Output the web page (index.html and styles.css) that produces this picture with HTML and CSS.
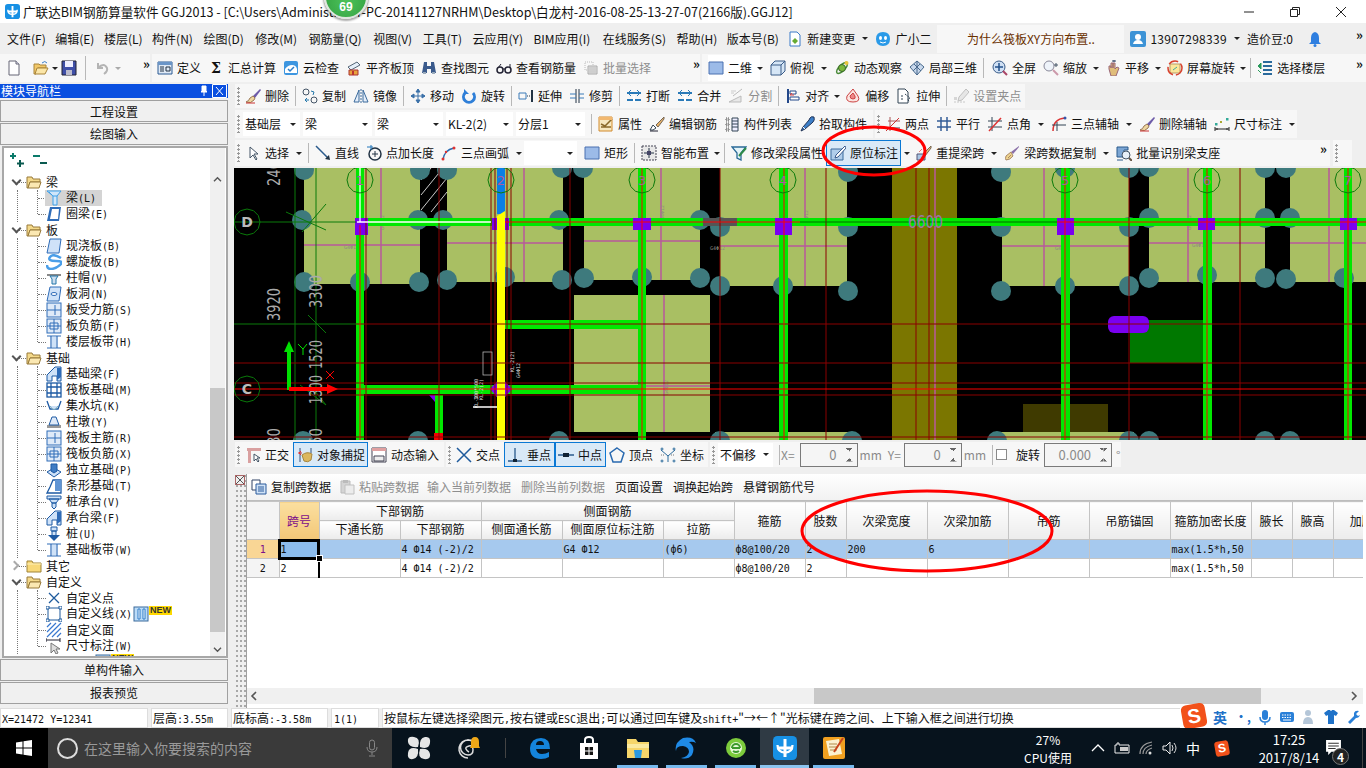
FILE: index.html
```html
<!DOCTYPE html>
<html lang="zh-CN">
<head>
<meta charset="utf-8">
<title>广联达BIM钢筋算量软件 GGJ2013</title>
<link rel="stylesheet" href="styles.css">
</head>
<body>
<svg class="defs" aria-hidden="true">
<defs>
<symbol id="new" viewBox="0 0 16 16"><path d="M3 1h7l3 3v11H3z" fill="#fff" stroke="#667"/><path d="M10 1v3h3" fill="#dde" stroke="#667"/></symbol>
<symbol id="open" viewBox="0 0 16 16"><path d="M1 4h5l1 1h6v3H5L3 14H1z" fill="#f2c868" stroke="#a8843a"/><path d="M4 8h11l-3 6H2z" fill="#fbe6a8" stroke="#a8843a"/><path d="M9 3q3-3 5 0" fill="none" stroke="#3a7ec8"/></symbol>
<symbol id="save" viewBox="0 0 16 16"><path d="M1 1h14v14H1z" fill="#3f4fa8" stroke="#223"/><path d="M4 1h8v6H4z" fill="#eef"/><path d="M5 10h6v5H5z" fill="#bbc"/></symbol>
<symbol id="undo" viewBox="0 0 16 16"><path d="M4 3v5h5M4 8q6-6 9 0q1 3-3 6" fill="none" stroke="#b4b4b4" stroke-width="2"/></symbol>
<symbol id="def" viewBox="0 0 16 16"><path d="M1 2h14v12H1z" fill="#dfe9f5" stroke="#2a5b94"/><path d="M1 2h14v3H1z" fill="#6a95c8"/><path d="M3 7h4M3 9h4M3 11h4M9 7h4v4H9z" fill="none" stroke="#234"/></symbol>
<symbol id="cloud" viewBox="0 0 16 16"><rect x="1" y="1" width="14" height="14" rx="2" fill="#3d96e0"/><path d="M2 9q3-4 7-4t5 4v4H2z" fill="#fff"/><path d="M5 9l2 2 4-4" fill="none" stroke="#2c7ec8" stroke-width="1.5"/></symbol>
<symbol id="flat" viewBox="0 0 16 16"><path d="M2 7l9-5 3 3-9 5z" fill="#e6f0fa" stroke="#567"/><path d="M3 10h9v5H3z" fill="#e8a33c" stroke="#a33"/><path d="M6 11h2v4H6z" fill="#b33"/></symbol>
<symbol id="binoc" viewBox="0 0 16 16"><path d="M3 2h3v4h4V2h3l2 11h-5V9H6v4H1z" fill="#3a5a8c"/><path d="M2 12h3v2H2zM11 12h3v2h-3z" fill="#9ab"/></symbol>
<symbol id="glass" viewBox="0 0 16 16"><circle cx="4" cy="10" r="3" fill="none" stroke="#223" stroke-width="1.5"/><circle cx="12" cy="10" r="3" fill="none" stroke="#223" stroke-width="1.5"/><path d="M7 9h2M2 8l3-4M14 8V4" fill="none" stroke="#223"/></symbol>
<symbol id="batch" viewBox="0 0 16 16"><path d="M2 2h8v8H2z" fill="none" stroke="#bbb" stroke-dasharray="1 1"/><path d="M5 6h9v8H5z" fill="#e2e2e2" stroke="#aaa"/><path d="M6 8h7M6 10h7M6 12h7" stroke="#bbb"/></symbol>
<symbol id="sq" viewBox="0 0 16 16"><path d="M1 2h14v12H1z" fill="#9cbbe8" stroke="#4a70b0"/></symbol>
<symbol id="top" viewBox="0 0 16 16"><path d="M1 5l4-4h10v10l-4 4H1z" fill="#d6e6f6" stroke="#3a5c88"/><path d="M1 5h10v10M11 5l4-4" fill="none" stroke="#3a5c88"/></symbol>
<symbol id="orbit" viewBox="0 0 16 16"><ellipse cx="8" cy="8" rx="7" ry="3" transform="rotate(-45 8 8)" fill="none" stroke="#4a8a3a" stroke-width="1.5"/><circle cx="8" cy="8" r="3.5" fill="#7cb83c" stroke="#3a6a2a"/><circle cx="12.5" cy="3" r="2" fill="#e8c43c"/></symbol>
<symbol id="l3d" viewBox="0 0 16 16"><path d="M8 1l7 6-7 8-7-8z" fill="#c8d8ec" stroke="#48698c"/><path d="M5 4l7 7M11 4L4 11M8 1v14" stroke="#48698c"/></symbol>
<symbol id="full" viewBox="0 0 16 16"><circle cx="7" cy="7" r="6" fill="#cfe0f4" stroke="#3a5c88"/><path d="M7 3v8M3 7h8" stroke="#23508a" stroke-width="1.5"/><path d="M11 11l4 4" stroke="#a46" stroke-width="2"/></symbol>
<symbol id="zoom" viewBox="0 0 16 16"><circle cx="6" cy="6" r="5" fill="#eef3fa" stroke="#889"/><path d="M10 10l5 5" stroke="#c9a" stroke-width="2"/><path d="M13 3v4M11 5h4" stroke="#456"/></symbol>
<symbol id="hand" viewBox="0 0 16 16"><path d="M4 9V6h2v2-5h2v5-5h2v6l2-2 2 1-3 8H6z" fill="#e0bd7a" stroke="#967"/><path d="M9 0v2M7 1h4" stroke="#346"/></symbol>
<symbol id="rot" viewBox="0 0 16 16"><rect x="3" y="4" width="10" height="9" fill="#fbe79a" stroke="#b96"/><circle cx="8" cy="8" r="7" fill="none" stroke="#d8402c" stroke-width="1.5" stroke-dasharray="10 3"/><path d="M6 10l4-3" stroke="#4a9"/></symbol>
<symbol id="floor" viewBox="0 0 16 16"><path d="M6 2h9M6 6h9M6 10h9M6 14h9" stroke="#2a6a9c" stroke-width="2"/><path d="M4 3L1 6l3 3zM1 10l3 3" fill="#2a9a5c" stroke="#2a9a5c"/></symbol>
<symbol id="brush" viewBox="0 0 16 16"><path d="M15 1l-7 7 2 2 6-8z" fill="#6d5ba8"/><path d="M8 8l-3 2q-1 3-4 4 5 2 8-2l1-2z" fill="#eed6a0" stroke="#975"/><path d="M1 15h9" stroke="#c33"/></symbol>
<symbol id="copy" viewBox="0 0 16 16"><circle cx="4" cy="4" r="3" fill="none" stroke="#456"/><circle cx="12" cy="12" r="3" fill="none" stroke="#456"/><path d="M5 10l-2 2 2 2M3 12h4M9 3l3 1-1 3" fill="none" stroke="#27a"/></symbol>
<symbol id="mirror" viewBox="0 0 16 16"><path d="M6 2v12H1zM10 2v12h5z" fill="#e4eefa" stroke="#3a6a9c"/><path d="M8 1v14" stroke="#3a6a9c" stroke-dasharray="2 1"/></symbol>
<symbol id="move" viewBox="0 0 16 16"><path d="M8 1v14M1 8h14M8 1L6 4h4zM8 15l-2-3h4zM1 8l3-2v4zM15 8l-3-2v4z" fill="#3a70a8" stroke="#3a70a8"/></symbol>
<symbol id="spin" viewBox="0 0 16 16"><path d="M12 5a5.5 5.5 0 1 1-8 0" fill="none" stroke="#2f7fd8" stroke-width="3"/><path d="M3 1v5h5z" fill="#2f7fd8"/></symbol>
<symbol id="ext" viewBox="0 0 16 16"><path d="M14 2v12" stroke="#234" stroke-width="2"/><path d="M1 5h7v6H1z" fill="none" stroke="#3a7ab8"/><path d="M9 8h4" stroke="#234" stroke-dasharray="1 1"/></symbol>
<symbol id="trim" viewBox="0 0 16 16"><path d="M7 1v14M10 1v14" stroke="#234"/><path d="M1 6h6M1 10h6M10 6h5M10 10h5" stroke="#3a7ab8"/></symbol>
<symbol id="brk" viewBox="0 0 16 16"><path d="M1 5h14M1 12h14" stroke="#2a7ab8" stroke-width="2"/><path d="M5 2L2 5l3 3M11 2l3 3-3 3" fill="none" stroke="#2a7ab8"/><path d="M8 8v6" stroke="#fff" stroke-width="2"/></symbol>
<symbol id="split" viewBox="0 0 16 16"><path d="M1 14h12V8L1 14zM5 8l9-7" fill="#e8e8e8" stroke="#bbb"/><path d="M3 3h5M3 5h3" stroke="#ccc"/></symbol>
<symbol id="align" viewBox="0 0 16 16"><path d="M3 1v14" stroke="#23488a" stroke-width="2"/><path d="M5 3h6v3H5zM5 9h9v3H5z" fill="#fff" stroke="#23488a"/><path d="M9 7L5 7l2-2" fill="none" stroke="#d44"/></symbol>
<symbol id="offset" viewBox="0 0 16 16"><path d="M8 1l5 7q3 6-5 6t-6-6z" fill="#fbe4e0" stroke="#c44"/><path d="M8 5l2 3q1 3-2 3t-3-3z" fill="#e88" stroke="#c44"/></symbol>
<symbol id="stretch" viewBox="0 0 16 16"><path d="M2 1h7l3 3v11H2z" fill="#fff" stroke="#345"/><path d="M9 6l5 4-2 1 1 3M5 8h2M5 11h2" fill="none" stroke="#345" stroke-dasharray="2 1"/></symbol>
<symbol id="grip" viewBox="0 0 16 16"><path d="M13 1L6 9l-1 4 4-1 7-8z" fill="#e6e6e6" stroke="#c0c0c0"/><path d="M1 14h12" stroke="#c8c8c8" stroke-dasharray="2 1"/><rect x="1" y="9" width="3" height="3" fill="#d6d6d6"/></symbol>
<symbol id="attr" viewBox="0 0 16 16"><path d="M1 1h13v14H1z" fill="#f7e8c0" stroke="#d28a2c"/><path d="M3 8l4 2 7-7M3 11h10" fill="none" stroke="#8a6a2a" stroke-width="1.5"/><path d="M1 1h13v3H1z" fill="#f2b870"/></symbol>
<symbol id="edit" viewBox="0 0 16 16"><path d="M15 1l-8 8 2 2 6-8z" fill="#e6b36a" stroke="#765"/><path d="M1 14l3-5 3 3-3 2z" fill="#fff" stroke="#345"/><path d="M1 15h8" stroke="#223"/></symbol>
<symbol id="list" viewBox="0 0 16 16"><path d="M2 2h3v3H2zM2 7h3v3H2zM2 12h3v3H2z" fill="#ccc" stroke="#555" stroke-dasharray="1 1"/><path d="M8 2h6v13H8z" fill="#eef" stroke="#345"/><path d="M8 5h6M8 8h6M8 11h6" stroke="#345"/></symbol>
<symbol id="pick" viewBox="0 0 16 16"><path d="M15 1q-3-1-4 1l-1 2-6 7-2 4 4-2 7-6 1-1q2-2 1-5z" fill="#3d7fc8" stroke="#235"/><path d="M4 11l2 2" stroke="#fff"/></symbol>
<symbol id="two" viewBox="0 0 16 16"><path d="M3 5h12M5 1v14" stroke="#a55"/><path d="M1 15l13-13" stroke="#c33"/><path d="M5 12h10" stroke="#345"/></symbol>
<symbol id="par" viewBox="0 0 16 16"><path d="M1 5h14M1 11h14M5 1v14M11 1v14" stroke="#345d98" stroke-width="1.5"/></symbol>
<symbol id="ang" viewBox="0 0 16 16"><path d="M1 5h14M1 11h14M5 1v14" stroke="#345"/><path d="M2 15L14 2" stroke="#d33" stroke-width="1.5"/></symbol>
<symbol id="arcx" viewBox="0 0 16 16"><path d="M2 15q0-12 12-13" fill="none" stroke="#d33" stroke-width="1.5"/><path d="M1 9h14M6 6v9" stroke="#345"/><circle cx="14" cy="2" r="1.5" fill="#35a"/></symbol>
<symbol id="dim" viewBox="0 0 16 16"><path d="M1 13h14M1 11v4M15 11v4M4 13l-2 0M12 13h2" stroke="#222"/><rect x="1" y="7" width="2.500" height="2.500" fill="#3a9"/><rect x="12" y="2" width="2.500" height="2.500" fill="#3a9"/><rect x="6" y="5" width="2" height="2" fill="#aa3"/></symbol>
<symbol id="sel" viewBox="0 0 16 16"><path d="M5 2v11l3-3 3 5 1-1-3-5h4z" fill="#fff" stroke="#456"/></symbol>
<symbol id="line" viewBox="0 0 16 16"><path d="M1 1l12 12" stroke="#2a5a8c" stroke-width="1.5"/><path d="M15 15l-5-1 4-4z" fill="#234"/></symbol>
<symbol id="addl" viewBox="0 0 16 16"><circle cx="9" cy="9" r="6" fill="none" stroke="#234" stroke-width="1.5"/><path d="M9 6v6M6 9h6" stroke="#234"/><path d="M1 2h6M5 0v5" stroke="#27b"/></symbol>
<symbol id="arc" viewBox="0 0 16 16"><path d="M2 15q1-10 11-12" fill="none" stroke="#2a6ab0" stroke-width="1.5"/><circle cx="2" cy="14" r="1.500" fill="#d33"/><circle cx="13" cy="3" r="1.500" fill="#d33"/><circle cx="5" cy="7" r="1.200" fill="#d33"/></symbol>
<symbol id="smart" viewBox="0 0 16 16"><path d="M1 1h14v14H1z" fill="#e8e8e8" stroke="#445" stroke-dasharray="2 1"/><path d="M8 3v10M3 8h10" stroke="#234"/><rect x="6" y="6" width="4" height="4" fill="#446"/></symbol>
<symbol id="mod" viewBox="0 0 16 16"><path d="M1 2h14l-5 6v7l-4-2V8z" fill="#e4f4f8" stroke="#2a6a98" stroke-width="1.300"/><path d="M15 3L8 11" stroke="#2e8a4a" stroke-width="2"/></symbol>
<symbol id="orig" viewBox="0 0 16 16"><path d="M1 4h12v11H1z" fill="#b0cdea" stroke="#3a6a9c"/><path d="M15 1L6 10l-1 3 3-1 8-9z" fill="#fff" stroke="#3a5a8c"/></symbol>
<symbol id="re" viewBox="0 0 16 16"><path d="M1 9h8v6H1z" fill="#a9c7e4" stroke="#557"/><path d="M15 1L7 9l2 2 6-8z" fill="#e4c07c" stroke="#765"/><path d="M3 7l3-3" stroke="#d77"/></symbol>
<symbol id="dup" viewBox="0 0 16 16"><path d="M15 1L7 7l2 2 6-7z" fill="#8a6fa8"/><path d="M7 7L2 11q-1 3 0 4 4 0 7-4z" fill="#efd58e" stroke="#a86"/><path d="M4 13l3-3" stroke="#a86"/></symbol>
<symbol id="bat" viewBox="0 0 16 16"><path d="M1 2h11v3h-4v7H1z" fill="#7ca6d4" stroke="#2a5a8c"/><circle cx="10" cy="10" r="4" fill="#e8f0f8" stroke="#456"/><path d="M13 13l3 3" stroke="#654" stroke-width="2"/><path d="M1 15h6" stroke="#2a5a8c"/></symbol>
<symbol id="ortho" viewBox="0 0 16 16"><path d="M2 1h14v3H2z" fill="#d9a0a0"/><path d="M3 1h3v15H3z" fill="#d9a0a0"/><path d="M9 7v7l2-2 2 3 1-1-2-3h3z" fill="#fff" stroke="#456"/></symbol>
<symbol id="snap" viewBox="0 0 16 16"><path d="M3 1v14M14 1v5" stroke="#33507a"/><path d="M1 6h4M4 4l-2 2 2 2" fill="none" stroke="#d33"/><path d="M5 8q5-4 10-1l-1 6q-3 3-7 1z" fill="#dcb75e" stroke="#a7853c"/></symbol>
<symbol id="dyn" viewBox="0 0 16 16"><path d="M1 1h14v14H1z" fill="#fff" stroke="#445"/><path d="M1 1h14v3H1z" fill="#e0a0a0"/><path d="M3 9h10v5H3z" fill="#eee" stroke="#445"/></symbol>
<symbol id="x" viewBox="0 0 16 16"><path d="M1 1l14 14M15 1L1 15" stroke="#1e5a9c" stroke-width="1.500"/></symbol>
<symbol id="perp" viewBox="0 0 16 16"><path d="M8 1v14M1 14h14" stroke="#2a5a8c" stroke-width="1.300"/><rect x="6" y="12" width="4" height="3" fill="#123"/></symbol>
<symbol id="mid" viewBox="0 0 16 16"><path d="M0 8h16" stroke="#2a5a8c" stroke-width="1.500"/><rect x="5" y="6" width="6" height="4" fill="#123"/></symbol>
<symbol id="vert" viewBox="0 0 16 16"><path d="M8 1l7 5-3 9H4L1 6z" fill="none" stroke="#2a6ab0" stroke-width="1.500"/></symbol>
<symbol id="coord" viewBox="0 0 16 16"><path d="M1 3l7 6v6M15 3L8 9" fill="none" stroke="#2a6a9c"/><g fill="none" stroke="#2a6a9c"><circle cx="2" cy="2" r="1"/><circle cx="14" cy="2" r="1"/><circle cx="2" cy="14" r="1"/><circle cx="14" cy="14" r="1"/></g><path d="M1 8h4M11 8h4" stroke="#777" stroke-dasharray="1 1"/></symbol>
<symbol id="cdat" viewBox="0 0 16 16"><path d="M1 1h8v10H1z" fill="#fff" stroke="#346"/><path d="M5 5h10v10H5z" fill="#d0e2f6" stroke="#2a5a9c"/><path d="M7 8h6M7 10h6M7 12h6" stroke="#2a5a9c"/></symbol>
<symbol id="paste" viewBox="0 0 16 16"><path d="M2 2h9v12H2z" fill="#d4d4d4" stroke="#bbb"/><path d="M6 6h9v9H6z" fill="#ececec" stroke="#c0c0c0"/><rect x="4" y="1" width="5" height="3" fill="#bbb"/></symbol>
<symbol id="bell" viewBox="0 0 16 16"><path d="M8 1q-4 1-4 6v4l-2 2h12l-2-2V7q0-5-4-6z" fill="#2f7fe0"/><circle cx="8" cy="14.500" r="1.500" fill="#2f7fe0"/></symbol>
<symbol id="doc" viewBox="0 0 16 16"><path d="M3 1h7l3 3v11H3z" fill="#fff" stroke="#3a7ac8"/><path d="M8 13l-3-3 3-3 3 3z" fill="#66aa33"/></symbol>
<symbol id="bot" viewBox="0 0 16 16"><path d="M8 1q7 0 7 7 0 7-7 7T1 8q0-7 7-7z" fill="#2a9ae8"/><ellipse cx="5.500" cy="7" rx="1.500" ry="2" fill="#fff"/><ellipse cx="10.500" cy="7" rx="1.500" ry="2" fill="#fff"/><path d="M5 11q3 2 6 0" stroke="#fff" fill="none"/></symbol>
<symbol id="user" viewBox="0 0 16 16"><rect width="16" height="16" rx="2" fill="#3d93d6"/><circle cx="8" cy="6" r="3" fill="#fff"/><path d="M3 13q1-4 5-4t5 4z" fill="#fff"/></symbol>

<symbol id="t-beam" viewBox="0 0 16 16"><path d="M1 1h14l-4 5v9H7V6z" fill="#cfe6fa" stroke="#3fa0e8"/><path d="M7 6h4" stroke="#3fa0e8"/><path d="M3 2l3 3" stroke="#3fa0e8"/></symbol>
<symbol id="t-ring" viewBox="0 0 16 16"><path d="M4 1h11l-2 14H1z" fill="#2f6cb8"/><path d="M6 3h7l-1 10H4z" fill="#fff"/></symbol>
<symbol id="t-slab" viewBox="0 0 16 16"><path d="M4 1h11l-2 14H1z" fill="#cfe2f8" stroke="#2f6cb8"/></symbol>
<symbol id="t-sp" viewBox="0 0 16 16"><path d="M15 4Q7-1 4 3t6 4 4 4-9 4-4-4" fill="none" stroke="#4a9ee8" stroke-width="2.500"/></symbol>
<symbol id="t-cap" viewBox="0 0 16 16"><path d="M1 4h14v2H1z" fill="#888"/><path d="M4 6h8l-2 3v5H6V9z" fill="#cde" stroke="#27a"/></symbol>
<symbol id="t-hole" viewBox="0 0 16 16"><path d="M4 1h11l-2 14H1z" fill="#cfe2f8" stroke="#2f6cb8"/><ellipse cx="8" cy="8" rx="3" ry="1.500" fill="#fff" stroke="#2f6cb8"/></symbol>
<symbol id="t-reb" viewBox="0 0 16 16"><rect x="1" y="1" width="14" height="14" fill="#dfeaf8" stroke="#2f6cb8"/><path d="M1 8h14M9 3v10" stroke="#2f6cb8"/></symbol>
<symbol id="t-neg" viewBox="0 0 16 16"><rect x="1" y="1" width="14" height="14" fill="#dfeaf8" stroke="#2f6cb8"/><path d="M4 5h8v6H4zM8 1v14M1 8h14" fill="none" stroke="#2f6cb8"/></symbol>
<symbol id="t-band" viewBox="0 0 16 16"><path d="M1 2h14M1 14h14M5 2v12M11 2v12" stroke="#2f6cb8" stroke-width="1.200"/><path d="M6 3h4v10H6z" fill="#cfe2f8"/></symbol>
<symbol id="t-fb" viewBox="0 0 16 16"><path d="M1 15V9l8-8h6v14h-4v-5H6v5z" fill="#cfe2f8" stroke="#1d5aa4"/><path d="M11 2l4 0v9l-4 3z" fill="#2f6cb8"/></symbol>
<symbol id="t-raft" viewBox="0 0 16 16"><rect x="1" y="1" width="14" height="14" fill="#fff" stroke="#1d5aa4" stroke-width="1.300"/><path d="M5 1v14M11 1v14M1 5h14M1 11h14" stroke="#1d5aa4" stroke-width="1.300"/></symbol>
<symbol id="t-pit" viewBox="0 0 16 16"><path d="M1 3l3 8h8l3-8" fill="none" stroke="#1d5aa4" stroke-width="1.300"/><path d="M4 8q4 7 8 0" fill="#cfe2f8" stroke="#7ab"/></symbol>
<symbol id="t-pier" viewBox="0 0 16 16"><path d="M1 11h14v3H1z" fill="#999"/><path d="M6 3h4l3 8H3z" fill="#dfeaf8" stroke="#1d5aa4"/></symbol>
<symbol id="t-iso" viewBox="0 0 16 16"><path d="M1 10l7-4 7 4-7 5z" fill="#cfe2f8" stroke="#1d5aa4"/><path d="M5 2h6v7l-3 2-3-2z" fill="#3f7cc4" stroke="#1d5aa4"/></symbol>
<symbol id="t-str" viewBox="0 0 16 16"><path d="M1 15l3-6 3-7h8v13z" fill="#fff" stroke="#1d5aa4" stroke-width="1.300"/><path d="M9 2h6v11H9z" fill="#5f94d4"/></symbol>
<symbol id="t-cp" viewBox="0 0 16 16"><path d="M1 2h14v3H1zM3 5h10l-3 4H6zM6 9h4v4L8 15l-2-2z" fill="#cfe2f8" stroke="#1d5aa4"/></symbol>
<symbol id="t-pile" viewBox="0 0 16 16"><path d="M5 1h6v4H5zM6 5h4v5H6z" fill="#cfe2f8" stroke="#1d5aa4"/><path d="M2 9h12L8 15z" fill="#1d5aa4"/></symbol>
<symbol id="t-cross" viewBox="0 0 16 16"><path d="M3 3l10 10M13 3L3 13" stroke="#1e5a9c" stroke-width="1.300"/></symbol>
<symbol id="t-rect" viewBox="0 0 16 16"><path d="M2 2h12v12H2z" fill="none" stroke="#1e5a9c"/><path d="M0 0h3v3H0zM13 0h3v3h-3zM0 13h3v3H0zM13 13h3v3h-3z" fill="#fff" stroke="#1e5a9c"/></symbol>
<symbol id="t-hatch" viewBox="0 0 16 16"><path d="M1 5l4-4M1 10l9-9M1 15L15 1M6 15l9-9M11 15l4-4" stroke="#3878d0" stroke-width="1.200"/></symbol>
<symbol id="t-dim" viewBox="0 0 16 16"><path d="M0 2h14M0 0v4M14 0v4" stroke="#223"/><path d="M5 5v10l3-3 2 4 2-1-2-4h4z" fill="#ddd" stroke="#777"/></symbol>
<symbol id="t-tbl" viewBox="0 0 16 16"><rect x="1" y="1" width="14" height="14" fill="#bcdcf8" stroke="#3a6a9c"/><path d="M5 3h2v10H5zM10 3h2v10h-2z" fill="#fff" stroke="#2a7ac8"/></symbol>
<symbol id="folder" viewBox="0 0 16 16"><path d="M1 3h5l1 2h7v3H4l-2 6H1z" fill="#f4d98a" stroke="#987a3a"/><path d="M4 8h11l-2 6H2z" fill="#fbe8b2" stroke="#987a3a"/></symbol>
<symbol id="fclosed" viewBox="0 0 16 16"><path d="M1 3h5l1 2h8v9H1z" fill="#f8d878" stroke="#a08438"/><path d="M1 6h14" stroke="#fff0b8"/></symbol>
<symbol id="logo" viewBox="0 0 16 16"><rect width="16" height="16" rx="3" fill="#1790e4"/><path d="M8 2v12M3 8h10" stroke="#fff" stroke-width="2" fill="none"/><path d="M3 6q0 5 5 5t5-5" stroke="#fff" fill="none" stroke-width="1.500"/></symbol>
</defs>
</svg>

<header class="title">
  <svg class="logo"><use href="#logo"/></svg>
  <span class="title-text">广联达BIM钢筋算量软件 GGJ2013 - [C:\Users\Administrator-PC-20141127NRHM\Desktop\白龙村-2016-08-25-13-27-07(2166版).GGJ12]</span>
  <span class="win">
    <svg class="wb" viewBox="0 0 12 12"><path d="M1 6h10" stroke="#222"/></svg>
    <svg class="wb" viewBox="0 0 12 12"><path d="M1.500 3.500h7v7h-7zM3.500 3.500v-2h7v7h-2" fill="none" stroke="#222"/></svg>
    <svg class="wb" viewBox="0 0 12 12"><path d="M1 1l10 10M11 1L1 11" stroke="#222"/></svg>
  </span>
</header>

<nav class="menu">
  <span class="mi mn">文件(F)</span><span class="mi mn">编辑(E)</span><span class="mi mn">楼层(L)</span><span class="mi">构件(N)</span><span class="mi mp">绘图(D)</span><span class="mi mp">修改(M)</span><span class="mi mp">钢筋量(Q)</span><span class="mi">视图(V)</span><span class="mi">工具(T)</span><span class="mi">云应用(Y)</span><span class="mi mpp">BIM应用(I)</span><span class="mi">在线服务(S)</span><span class="mi mn">帮助(H)</span><span class="mi">版本号(B)</span>
  <div class="menu-tail">
    <span class="t"><svg class="i"><use href="#doc"/></svg>新建变更</span><i class="ar"></i>
    <span class="t"><svg class="i"><use href="#bot"/></svg>广小二</span>
    <span class="news">为什么筏板XY方向布置..</span>
    <span class="t phone"><svg class="i"><use href="#user"/></svg>13907298339</span><i class="ar"></i>
    <span class="coins">造价豆:0</span>
    <svg class="i i-bell"><use href="#bell"/></svg>
    <span class="more more-end">»</span>
  </div>
</nav>

<div class="row r1">
  <div class="grp g-a">
    <svg class="i"><use href="#new"/></svg>
    <svg class="i i-open"><use href="#open"/></svg><i class="ar ar-tight"></i>
    <svg class="i"><use href="#save"/></svg>
    <b class="sep"></b>
    <svg class="i"><use href="#undo"/></svg><i class="ar off-ar"></i>
    <span class="more">»</span>
  </div>
  <div class="grp g-b">
    <span class="t"><svg class="i"><use href="#def"/></svg>定义</span>
    <span class="t"><span class="sigma">Σ</span>汇总计算</span>
    <span class="t"><svg class="i"><use href="#cloud"/></svg>云检查</span>
    <span class="t"><svg class="i"><use href="#flat"/></svg>平齐板顶</span>
    <span class="t"><svg class="i"><use href="#binoc"/></svg>查找图元</span>
    <span class="t"><svg class="i"><use href="#glass"/></svg>查看钢筋量</span>
    <span class="t off"><svg class="i"><use href="#batch"/></svg>批量选择</span>
    <span class="more">»</span>
  </div>
  <div class="grp g-c">
    <span class="t t-white"><svg class="i"><use href="#sq"/></svg>二维</span><i class="ar"></i>
    <span class="t"><svg class="i"><use href="#top"/></svg>俯视</span><i class="ar"></i>
    <span class="t"><svg class="i"><use href="#orbit"/></svg>动态观察</span>
    <span class="t"><svg class="i"><use href="#l3d"/></svg>局部三维</span>
    <b class="sep sep-r"></b>
    <span class="t"><svg class="i"><use href="#full"/></svg>全屏</span>
    <span class="t"><svg class="i"><use href="#zoom"/></svg>缩放</span><i class="ar ar-s"></i>
    <span class="t"><svg class="i"><use href="#hand"/></svg>平移</span><i class="ar ar-s"></i>
    <span class="t"><svg class="i"><use href="#rot"/></svg>屏幕旋转</span><i class="ar ar-tight"></i>
    <b class="sep"></b>
    <span class="t"><svg class="i"><use href="#floor"/></svg>选择楼层</span>
    <span class="more more-end">»</span>
  </div>
</div>

<main class="main">
  <aside class="nav">
    <div class="nav-head"><span>模块导航栏</span><svg class="pin" viewBox="0 0 10 12"><path d="M3 1h4v5l1 1H2l1-1zM5 7v4" fill="#fff" stroke="#fff"/></svg><svg class="nav-x" viewBox="0 0 15 14"><path d="M.5.5h14v13H.5z" fill="none" stroke="#fff"/><path d="M4 3l7 8M11 3l-7 8" stroke="#fff"/></svg></div>
    <button class="nbtn nb-first">工程设置</button>
    <button class="nbtn">绘图输入</button>
    <div class="treebox">
      <div class="tree">
        <div class="plus">
          <svg class="pm" viewBox="0 0 16 16"><path d="M4 1v6M1 4h6" stroke="#0a7a6a" stroke-width="2"/><path d="M11 8v7M8 11.500h7" stroke="#0a5a50" stroke-width="2"/></svg>
          <svg class="pm pm2" viewBox="0 0 16 16"><path d="M1 4h7" stroke="#0a7a6a" stroke-width="2"/><path d="M8 11h7" stroke="#0a5a50" stroke-width="2"/></svg>
        </div>
        <div class="node"><i class="chev"></i><svg class="i"><use href="#folder"/></svg><span>梁</span></div>
        <div class="kids">
          <div class="leaf cur"><svg class="i"><use href="#t-beam"/></svg><span>梁<span class="m">(L)</span></span></div>
          <div class="leaf"><svg class="i"><use href="#t-ring"/></svg><span>圈梁<span class="m">(E)</span></span></div>
        </div>
        <div class="node"><i class="chev"></i><svg class="i"><use href="#folder"/></svg><span>板</span></div>
        <div class="kids">
          <div class="leaf"><svg class="i"><use href="#t-slab"/></svg><span>现浇板<span class="m">(B)</span></span></div>
          <div class="leaf"><svg class="i"><use href="#t-sp"/></svg><span>螺旋板<span class="m">(B)</span></span></div>
          <div class="leaf"><svg class="i"><use href="#t-cap"/></svg><span>柱帽<span class="m">(V)</span></span></div>
          <div class="leaf"><svg class="i"><use href="#t-hole"/></svg><span>板洞<span class="m">(N)</span></span></div>
          <div class="leaf"><svg class="i"><use href="#t-reb"/></svg><span>板受力筋<span class="m">(S)</span></span></div>
          <div class="leaf"><svg class="i"><use href="#t-neg"/></svg><span>板负筋<span class="m">(F)</span></span></div>
          <div class="leaf"><svg class="i"><use href="#t-band"/></svg><span>楼层板带<span class="m">(H)</span></span></div>
        </div>
        <div class="node"><i class="chev"></i><svg class="i"><use href="#folder"/></svg><span>基础</span></div>
        <div class="kids">
          <div class="leaf"><svg class="i"><use href="#t-fb"/></svg><span>基础梁<span class="m">(F)</span></span></div>
          <div class="leaf"><svg class="i"><use href="#t-raft"/></svg><span>筏板基础<span class="m">(M)</span></span></div>
          <div class="leaf"><svg class="i"><use href="#t-pit"/></svg><span>集水坑<span class="m">(K)</span></span></div>
          <div class="leaf"><svg class="i"><use href="#t-pier"/></svg><span>柱墩<span class="m">(Y)</span></span></div>
          <div class="leaf"><svg class="i"><use href="#t-reb"/></svg><span>筏板主筋<span class="m">(R)</span></span></div>
          <div class="leaf"><svg class="i"><use href="#t-neg"/></svg><span>筏板负筋<span class="m">(X)</span></span></div>
          <div class="leaf"><svg class="i"><use href="#t-iso"/></svg><span>独立基础<span class="m">(P)</span></span></div>
          <div class="leaf"><svg class="i"><use href="#t-str"/></svg><span>条形基础<span class="m">(T)</span></span></div>
          <div class="leaf"><svg class="i"><use href="#t-cp"/></svg><span>桩承台<span class="m">(V)</span></span></div>
          <div class="leaf"><svg class="i"><use href="#t-fb"/></svg><span>承台梁<span class="m">(F)</span></span></div>
          <div class="leaf"><svg class="i"><use href="#t-pile"/></svg><span>桩<span class="m">(U)</span></span></div>
          <div class="leaf"><svg class="i"><use href="#t-band"/></svg><span>基础板带<span class="m">(W)</span></span></div>
        </div>
        <div class="node"><i class="chev chev-r"></i><svg class="i"><use href="#fclosed"/></svg><span>其它</span></div>
        <div class="node"><i class="chev"></i><svg class="i"><use href="#folder"/></svg><span>自定义</span></div>
        <div class="kids">
          <div class="leaf"><svg class="i"><use href="#t-cross"/></svg><span>自定义点</span></div>
          <div class="leaf"><svg class="i"><use href="#t-rect"/></svg><span>自定义线<span class="m">(X)</span></span><svg class="i tag"><use href="#t-tbl"/></svg><span class="new">NEW</span></div>
          <div class="leaf"><svg class="i"><use href="#t-hatch"/></svg><span>自定义面</span></div>
          <div class="leaf"><svg class="i"><use href="#t-dim"/></svg><span>尺寸标注<span class="m">(W)</span></span></div>
        </div>
        <div class="node"><svg class="i"><use href="#fclosed"/></svg><span>其它构件</span><svg class="i tag"><use href="#t-tbl"/></svg><span class="new">NEW</span></div>
      </div>
      <div class="vbar">
        <svg class="sb-a sb-up" viewBox="0 0 10 8"><path d="M1 6l4-4 4 4" fill="none" stroke="#555" stroke-width="1.600"/></svg>
        <div class="thumb"></div>
        <svg class="sb-a" viewBox="0 0 10 8"><path d="M1 2l4 4 4-4" fill="none" stroke="#555" stroke-width="1.600"/></svg>
      </div>
    </div>
    <button class="nbtn nb2">单构件输入</button>
    <button class="nbtn">报表预览</button>
  </aside>

  <section class="work">
    <div class="row r2">
      <div class="grp g2">
        <i class="gr"></i>
        <span class="t"><svg class="i"><use href="#brush"/></svg>删除</span><b class="sep"></b>
        <span class="t"><svg class="i"><use href="#copy"/></svg>复制</span>
        <span class="t"><svg class="i"><use href="#mirror"/></svg>镜像</span><b class="sep"></b>
        <span class="t"><svg class="i"><use href="#move"/></svg>移动</span>
        <span class="t"><svg class="i"><use href="#spin"/></svg>旋转</span><b class="sep"></b>
        <span class="t"><svg class="i"><use href="#ext"/></svg>延伸</span>
        <span class="t"><svg class="i"><use href="#trim"/></svg>修剪</span><b class="sep"></b>
        <span class="t"><svg class="i"><use href="#brk"/></svg>打断</span>
        <span class="t"><svg class="i"><use href="#brk"/></svg>合并</span>
        <span class="t off"><svg class="i"><use href="#split"/></svg>分割</span><b class="sep"></b>
        <span class="t"><svg class="i"><use href="#align"/></svg>对齐</span><i class="ar ar-tight"></i>
        <span class="t"><svg class="i"><use href="#offset"/></svg>偏移</span>
        <span class="t"><svg class="i"><use href="#stretch"/></svg>拉伸</span><b class="sep"></b>
        <span class="t off"><svg class="i"><use href="#grip"/></svg>设置夹点</span>
      </div>
    </div>
    <div class="row r3">
      <div class="grp g3a">
        <i class="gr gr-c"></i>
        <span class="combo c57">基础层<i class="ar"></i></span>
        <span class="combo c69">梁<i class="ar"></i></span>
        <span class="combo c68">梁<i class="ar"></i></span>
        <span class="combo c67">KL-2(2)<i class="ar"></i></span>
        <span class="combo c69 combo-end">分层1<i class="ar"></i></span>
        <b class="sep"></b>
        <span class="t"><svg class="i"><use href="#attr"/></svg>属性</span>
        <span class="t"><svg class="i"><use href="#edit"/></svg>编辑钢筋</span>
        <span class="t"><svg class="i"><use href="#list"/></svg>构件列表</span>
        <span class="t"><svg class="i"><use href="#pick"/></svg>拾取构件</span>
      </div>
      <div class="grp g3b">
        <i class="gr"></i>
        <span class="t"><svg class="i"><use href="#two"/></svg>两点</span>
        <span class="t"><svg class="i"><use href="#par"/></svg>平行</span>
        <span class="t"><svg class="i"><use href="#ang"/></svg>点角</span><i class="ar"></i>
        <span class="t"><svg class="i"><use href="#arcx"/></svg>三点辅轴</span><i class="ar"></i>
        <span class="t"><svg class="i"><use href="#brush"/></svg>删除辅轴</span>
        <span class="t"><svg class="i"><use href="#dim"/></svg>尺寸标注</span><i class="ar"></i>
      </div>
    </div>
    <div class="row r4">
      <div class="grp g4">
        <i class="gr"></i>
        <span class="t"><svg class="i"><use href="#sel"/></svg>选择</span><i class="ar"></i><b class="sep"></b>
        <span class="t"><svg class="i"><use href="#line"/></svg>直线</span>
        <span class="t"><svg class="i"><use href="#addl"/></svg>点加长度</span>
        <span class="t"><svg class="i"><use href="#arc"/></svg>三点画弧</span><i class="ar"></i>
        <span class="combo c53"><i class="ar"></i></span>
        <span class="t"><svg class="i"><use href="#sq"/></svg>矩形</span><b class="sep"></b>
        <span class="t"><svg class="i"><use href="#smart"/></svg>智能布置</span><i class="ar ar-tight"></i><b class="sep"></b>
        <span class="t"><svg class="i"><use href="#mod"/></svg>修改梁段属性</span>
        <span class="t on on-o"><svg class="i"><use href="#orig"/></svg>原位标注</span><i class="ar ar-s"></i>
        <span class="t"><svg class="i"><use href="#re"/></svg>重提梁跨</span><i class="ar"></i>
        <span class="t"><svg class="i"><use href="#dup"/></svg>梁跨数据复制</span><i class="ar"></i>
        <span class="t"><svg class="i"><use href="#bat"/></svg>批量识别梁支座</span>
        <span class="more more-end">»</span>
      </div>
      <div class="grp g4b"><i class="gr"></i></div>
    </div>

    <svg class="cad" viewBox="234 168 1132 272" role="img" aria-label="梁平面图">
      <defs>
        <polygon id="gc" points="13,0 11.300,6.500 6.500,11.300 0,13 -6.500,11.300 -11.300,6.500 -13,0 -11.300,-6.500 -6.500,-11.300 0,-13 6.500,-11.300 11.300,-6.500" fill="none" stroke="#0a7a0a"/>
      </defs>
      <rect x="234" y="168" width="1132" height="272" fill="#000"/>
      <g class="olive">
        <rect x="304" y="168" width="116" height="116"/><rect x="447" y="168" width="116" height="114"/><rect x="584" y="168" width="116" height="112"/><rect x="720" y="168" width="127" height="118"/><rect x="1002" y="168" width="127" height="118"/><rect x="1149" y="168" width="116" height="114"/><rect x="1290" y="168" width="76" height="114"/>
        <rect x="574" y="295" width="136" height="137"/><rect x="715" y="432" width="137" height="8"/><rect x="997" y="432" width="137" height="8"/>
      </g>
      <rect x="892" y="168" width="65" height="272" fill="#7b7600"/>
      <rect x="1023" y="404" width="85" height="28" fill="#3f3a00"/>
      <rect x="1130" y="320" width="73" height="43" fill="#007800"/>
      <g class="hatch"><path d="M421 180l10-12M421 195l22-27M421 210l26-32M431 212l16-20"/></g>
      <g class="mag">
        <path d="M381 168v116M524 168v114M661 168v112M664 295v137M805 168v118M935 168v272M1044 168v118M1188 168v114M1329 168v114"/>
        <path d="M304 245h116M447 243h116M584 241h116M720 246h127M1002 246h127M1149 243h116M1290 243h76M574 386h136"/>
      </g>
      <g class="tiny-g">
        <text x="344" y="249">G4Φ12</text><text x="710" y="250">G4Φ12</text><text x="1055" y="250">G4Φ12</text><text x="1192" y="247">G4Φ12</text><text x="630" y="384">G4Φ12</text>
        <text transform="rotate(-90 384 230)" x="384" y="230">G4Φ12</text><text transform="rotate(-90 664 220)" x="664" y="220">G4Φ12</text><text transform="rotate(-90 668 395)" x="668" y="395">G4Φ12</text><text transform="rotate(-90 808 225)" x="808" y="225">G4Φ12</text><text transform="rotate(-90 1191 230)" x="1191" y="230">G4Φ12</text>
      </g>
      <g class="teal">
        <circle cx="304" cy="170" r="10"/><circle cx="302" cy="220" r="10"/><circle cx="304" cy="282" r="10"/><circle cx="360" cy="282" r="10"/><circle cx="420" cy="170" r="10"/><circle cx="418" cy="220" r="10"/><circle cx="419" cy="282" r="10"/><circle cx="443" cy="220" r="10"/><circle cx="447" cy="280" r="10"/><circle cx="447" cy="170" r="10"/><circle cx="505" cy="277" r="10"/><circle cx="559" cy="220" r="10"/><circle cx="562" cy="280" r="10"/><circle cx="584" cy="278" r="10"/><circle cx="583" cy="168" r="10"/><circle cx="562" cy="168" r="10"/><circle cx="642" cy="277" r="10"/><circle cx="700" cy="278" r="10"/><circle cx="720" cy="286" r="10"/><circle cx="720" cy="227" r="10"/><circle cx="700" cy="220" r="10"/><circle cx="783" cy="286" r="10"/><circle cx="303" cy="441" r="10"/><circle cx="418" cy="441" r="10"/><circle cx="559" cy="441" r="10"/><circle cx="720" cy="441" r="10"/>
        <circle cx="848" cy="172" r="10"/><circle cx="848" cy="227" r="10"/><circle cx="848" cy="291" r="10"/><circle cx="1001" cy="172" r="10"/><circle cx="1001" cy="227" r="10"/><circle cx="1001" cy="291" r="10"/><circle cx="1065" cy="286" r="10"/><circle cx="1129" cy="227" r="10"/><circle cx="1129" cy="286" r="10"/><circle cx="1149" cy="218" r="10"/><circle cx="1149" cy="278" r="10"/><circle cx="1207" cy="275" r="10"/><circle cx="1265" cy="218" r="10"/><circle cx="1290" cy="218" r="10"/><circle cx="1265" cy="278" r="10"/><circle cx="1286" cy="279" r="10"/><circle cx="1344" cy="278" r="10"/><circle cx="1265" cy="168" r="10"/><circle cx="1286" cy="168" r="10"/><circle cx="1129" cy="168" r="10"/><circle cx="1149" cy="167" r="10"/><circle cx="1065" cy="168" r="10"/><circle cx="852" cy="441" r="10"/><circle cx="997" cy="441" r="10"/><circle cx="1129" cy="441" r="10"/><circle cx="1149" cy="441" r="10"/><circle cx="1265" cy="441" r="10"/><circle cx="1290" cy="441" r="10"/>
      </g>
      <g class="beam">
        <rect x="356" y="168" width="8" height="272"/><rect x="638" y="168" width="8" height="272"/><rect x="779" y="168" width="9" height="272"/><rect x="1061" y="168" width="9" height="272"/><rect x="1203" y="168" width="9" height="272"/><rect x="1344" y="168" width="8" height="272"/>
        <rect x="356" y="218" width="1010" height="8"/><rect x="356" y="385" width="286" height="9"/><rect x="505" y="320" width="137" height="9"/><rect x="435" y="395" width="8" height="45"/>
      </g>
      <path d="M490 389l11-12 11 12-11 13z" fill="#7a00f0"/><path d="M429 395h6v7z" fill="#7a00f0"/>
      <g class="pur">
        <rect x="355" y="218" width="13" height="17"/><rect x="492" y="218" width="17" height="12"/><rect x="633" y="218" width="18" height="12"/><rect x="775" y="218" width="17" height="17"/><rect x="1057" y="218" width="17" height="17"/><rect x="1198" y="218" width="17" height="12"/><rect x="1340" y="218" width="17" height="12"/>
        <rect x="1108" y="316" width="41" height="17" rx="6"/>
      </g>
      <rect x="703" y="218" width="34" height="8" fill="#555"/>
      <rect x="497" y="168" width="8" height="46" fill="#0a7fe6"/>
      <path d="M497 216l8-5v229h-8z" fill="#ff0"/>
      <rect x="434" y="433" width="9" height="7" fill="#e00"/>
      <g class="dg">
        <path d="M234 222h122M234 324h122M295 168v272M316 168v272M286 212l40 18M308 315l18 18M300 385l26 20M310 385l16 20M302 232l24-28"/>
      </g>
      <g class="dr">
        <path d="M356 324h1010M234 363h1132M234 383h1132M234 395h1132M234 437h1132"/>
        <path d="M366 168v272M439 168v272M491 168v272M495 168v272M507 168v272M511 168v272M570 168v272M720 168v272M826 168v272M916 168v272M929 168v272M1129 168v272M1240 168v272"/>
      </g>
      <g class="rd">
        <path d="M505 222h295M1057 222h309M234 389h1132"/>
        <path d="M360 225v215M642 168v272M784 168v272M1065 168v272M1207 168v272M1348 168v272"/>
      </g>
      <path d="M800 222h257" stroke="#006a00"/>
      <path d="M360 168v54M357 222h134" stroke="#fff" stroke-width="1.300"/>
      <g>
        <use href="#gc" x="360" y="180"/><use href="#gc" x="501" y="180"/><use href="#gc" x="642" y="180"/><use href="#gc" x="783" y="180"/><use href="#gc" x="1065" y="180"/><use href="#gc" x="1207" y="180"/><use href="#gc" x="1348" y="180"/><use href="#gc" x="247" y="222"/><use href="#gc" x="247" y="389"/>
      </g>
      <g class="axisno"><text x="360" y="185">1</text><text x="501" y="185">2</text><text x="642" y="185">3</text><text x="783" y="185">4</text><text x="1065" y="185">5</text><text x="1207" y="185">6</text><text x="1348" y="185">7</text></g>
      <g class="axisl"><text x="247" y="227">D</text><text x="247" y="394">C</text></g>
      <g class="dimt">
        <text transform="rotate(-90 280 186)" x="280" y="186" textLength="25" lengthAdjust="spacingAndGlyphs">240</text>
        <text transform="rotate(-90 280 321)" x="280" y="321" textLength="33" lengthAdjust="spacingAndGlyphs">3920</text>
        <text transform="rotate(-90 322 308)" x="322" y="308" textLength="33" lengthAdjust="spacingAndGlyphs">3300</text>
        <text transform="rotate(-90 322 369)" x="322" y="369" textLength="29" lengthAdjust="spacingAndGlyphs">1520</text>
        <text transform="rotate(-90 322 404)" x="322" y="404" textLength="29" lengthAdjust="spacingAndGlyphs">1300</text>
        <text transform="rotate(-90 280 445)" x="280" y="445" textLength="17" lengthAdjust="spacingAndGlyphs">30</text>
        <text transform="rotate(-90 322 445)" x="322" y="445" textLength="17" lengthAdjust="spacingAndGlyphs">50</text>
      </g>
      <text class="d6600" x="908" y="228" textLength="35" lengthAdjust="spacingAndGlyphs">6600</text>
      <rect x="483" y="352" width="9" height="23" fill="none" stroke="#ccc" stroke-width=".7"/>
      <g class="tiny-w">
        <text transform="rotate(-90 478 400)" x="478" y="400">300*500</text>
        <text transform="rotate(-90 483 400)" x="483" y="400">KL-2(2)</text>
        <text transform="rotate(-90 478 408)" x="478" y="408">KL-2</text>
        <text transform="rotate(-90 514 372)" x="514" y="372">KL-2(2)</text>
        <text transform="rotate(-90 520 378)" x="520" y="378">G4Φ12</text>
      </g>
      <path d="M473 407h24" stroke="#fff" stroke-width="1.500"/>
      <path d="M289 390v-40" stroke="#00e000" stroke-width="4"/><path d="M284 352l5-11 5 11z" fill="#00e000"/>
      <path d="M289 389h40" stroke="#f00" stroke-width="4"/><path d="M327 384l11 5-11 5z" fill="#f00"/>
      <path d="M298 344l5 5 4-5M303 349v6" fill="none" stroke="#00e000"/>
      <path d="M326 371l8 8M334 371l-8 8" stroke="#f00"/>
    </svg>

    <div class="row r5">
      <div class="grp g5a">
        <i class="gr"></i>
        <span class="t"><svg class="i"><use href="#ortho"/></svg>正交</span>
        <span class="t on"><svg class="i"><use href="#snap"/></svg>对象捕捉</span>
        <span class="t"><svg class="i"><use href="#dyn"/></svg>动态输入</span>
      </div>
      <div class="grp g5b">
        <i class="gr"></i>
        <span class="t"><svg class="i"><use href="#x"/></svg>交点</span>
        <div class="pair">
          <span class="t on"><svg class="i"><use href="#perp"/></svg>垂点</span>
          <span class="t on"><svg class="i"><use href="#mid"/></svg>中点</span>
        </div>
        <span class="t"><svg class="i"><use href="#vert"/></svg>顶点</span>
        <span class="t"><svg class="i"><use href="#coord"/></svg>坐标</span>
      </div>
      <div class="grp g5c">
        <i class="gr"></i>
        <span class="combo c55">不偏移<i class="ar"></i></span>
        <b class="sep sep-x"></b>
        <span class="gt gt-x">X=</span>
        <span class="num n58">0<i class="spin"></i></span>
        <span class="gt">mm</span>
        <span class="gt g-y">Y=</span>
        <span class="num n58">0<i class="spin"></i></span>
        <span class="gt">mm</span>
        <b class="sep sep-c"></b>
        <i class="chk"></i>
        <span class="rot-l">旋转</span>
        <span class="num n68">0.000<i class="spin"></i></span>
        <span class="gt gt-d">°</span>
      </div>
    </div>

    <div class="lower">
      <div class="split"><svg class="close" viewBox="0 0 10 10"><rect x=".5" y=".5" width="9" height="9" fill="#eee" stroke="#a66"/><path d="M1 1l8 8M9 1L1 9" stroke="#555"/></svg></div>
      <div class="panel">
        <div class="ptb">
          <span class="t"><svg class="i"><use href="#cdat"/></svg>复制跨数据</span>
          <span class="t off t-paste"><svg class="i"><use href="#paste"/></svg>粘贴跨数据</span>
          <span class="t off">输入当前列数据</span>
          <span class="t off">删除当前列数据</span>
          <span class="t">页面设置</span>
          <span class="t">调换起始跨</span>
          <span class="t">悬臂钢筋代号</span>
        </div>
        <div class="tablewrap">
          <table class="grid">
            <colgroup>
              <col class="w32"><col class="w40"><col class="w81"><col class="w81"><col class="w81"><col class="w101"><col class="w71"><col class="w71"><col class="w41"><col class="w81"><col class="w81"><col class="w81"><col class="w81"><col class="w81"><col class="w41"><col class="w41"><col class="w81">
            </colgroup>
            <thead>
              <tr>
                <th rowspan="2" class="corner"></th>
                <th rowspan="2" class="kh">跨号</th>
                <th colspan="2">下部钢筋</th>
                <th colspan="3">侧面钢筋</th>
                <th rowspan="2">箍筋</th>
                <th rowspan="2">肢数</th>
                <th rowspan="2">次梁宽度</th>
                <th rowspan="2">次梁加筋</th>
                <th rowspan="2">吊筋</th>
                <th rowspan="2">吊筋锚固</th>
                <th rowspan="2">箍筋加密长度</th>
                <th rowspan="2">腋长</th>
                <th rowspan="2">腋高</th>
                <th rowspan="2" class="lastc">加腋钢筋</th>
              </tr>
              <tr class="hdr2">
                <th>下通长筋</th><th>下部钢筋</th><th>侧面通长筋</th><th>侧面原位标注筋</th><th>拉筋</th>
              </tr>
            </thead>
            <tbody>
              <tr class="sel-row">
                <td class="rh rh-s">1</td><td class="active">1<i class="handle"></i></td><td></td><td>4 Ф14 (-2)/2</td><td></td><td>G4 Ф12</td><td>(ф6)</td><td>ф8@100/20</td><td>2</td><td>200</td><td>6</td><td></td><td></td><td>max(1.5*h,50</td><td></td><td></td><td></td>
              </tr>
              <tr>
                <td class="rh">2</td><td class="below">2</td><td></td><td>4 Ф14 (-2)/2</td><td></td><td></td><td></td><td>ф8@100/20</td><td>2</td><td></td><td></td><td></td><td></td><td>max(1.5*h,50</td><td></td><td></td><td></td>
              </tr>
            </tbody>
          </table>
        </div>
        <div class="hbar">
          <svg class="sb-h" viewBox="0 0 8 10"><path d="M6 1L2 5l4 4" fill="none" stroke="#555" stroke-width="1.600"/></svg>
          <div class="hthumb"></div>
          <svg class="sb-h sb-r" viewBox="0 0 8 10"><path d="M2 1l4 4-4 4" fill="none" stroke="#555" stroke-width="1.600"/></svg>
        </div>
      </div>
    </div>
  </section>
</main>

<footer class="status">
  <span class="cell s148"><span class="m">X=21472 Y=12341</span></span>
  <span class="cell s77">层高<span class="m">:3.55m</span></span>
  <span class="cell s97">底标高<span class="m">:-3.58m</span></span>
  <span class="cell s48"><span class="m">1(1)</span></span>
  <span class="cell s-msg">按鼠标左键选择梁图元<span class="m">,</span>按右键或<span class="m">ESC</span>退出<span class="m">;</span>可以通过回车键及<span class="m">shift+</span>"→←↑"光标键在跨之间、上下输入框之间进行切换</span>
  <span class="ime">
    <span class="sg">S</span><span class="ying">英</span>
    <span class="ime-p">•,</span>
    <svg class="ii" viewBox="0 0 16 16"><rect x="5" y="1" width="6" height="10" rx="3" fill="#2a80d8"/><path d="M3 8q0 5 5 5t5-5M8 13v3" fill="none" stroke="#2a80d8" stroke-width="1.500"/></svg>
    <svg class="ii" viewBox="0 0 16 16"><rect x="1" y="3" width="14" height="10" rx="2" fill="#2a80d8"/><path d="M3 6h10M3 8.500h10" stroke="#fff" stroke-dasharray="1.500 1"/><path d="M4 11h8" stroke="#fff"/></svg>
    <svg class="ii" viewBox="0 0 16 16"><circle cx="7" cy="4" r="3" fill="#b4c6d8"/><path d="M2 15q0-7 5-7t5 7z" fill="#b4c6d8"/></svg>
    <svg class="ii" viewBox="0 0 16 16"><path d="M5 1L1 4l2 3 2-1v9h6V6l2 1 2-3-4-3H9q-1 2-2 0z" fill="#1f72c8"/></svg>
    <svg class="ii" viewBox="0 0 16 16"><path d="M14 2q-4-1-5 2v3l-6 6 2 2 6-6q3 0 4-3l-2 1-2-2z" fill="#2a80d8"/></svg>
  </span>
</footer>

<div class="taskbar">
  <div class="start"><svg class="winlogo" viewBox="0 0 16 16"><path d="M0 2.500l6.500-1v6H0zM7.500 1.300L16 0v7.500H7.500zM0 8.500h6.500v6l-6.500-1zM7.500 8.500H16V16l-8.500-1.300z" fill="#fff"/></svg></div>
  <div class="search">
    <i class="ring"></i><span>在这里输入你要搜索的内容</span>
    <svg class="mic" viewBox="0 0 12 18"><rect x="3.500" y="1" width="5" height="10" rx="2.500" fill="none" stroke="#888"/><path d="M1 8q0 5 5 5t5-5M6 13v3M3 17h6" fill="none" stroke="#888"/></svg>
  </div>
  <div class="apps">
    <span class="app"><svg class="ai" viewBox="0 0 24 24"><path d="M11 11Q2 12 1 6t6-5 4 10zM13 11q-1-9 5-10t5 6-10 4zM13 13q9-1 10 5t-6 5-4-10zM11 13q1 9-5 10t-5-6 10-4z" fill="#e6e6e6"/></svg></span>
    <span class="app"><svg class="ai" viewBox="0 0 24 24"><path d="M12 22A9 9 0 1 1 20 9q-1-5-8-5a7 7 0 0 0 0 15q5 0 5-5t-4-4-3 3 3 3" fill="none" stroke="#ddd" stroke-width="1.500"/><path d="M19 1q-4 0-4 5v4l-1 2h10l-1-2V6q0-5-4-5z" fill="#f0a818"/></svg></span>
    <i class="tsep"></i>
    <span class="app"><svg class="ai" viewBox="0 0 24 24"><path d="M2 12Q3 2 13 2q9 0 9 11H8q1 5 6 5 4 0 7-2v5q-3 2-8 2Q2 23 2 12zm6-3h8q0-4-4-4T8 9z" fill="#1484dc"/></svg></span>
    <span class="app"><svg class="ai" viewBox="0 0 24 24"><path d="M3 7h18v16H3z" fill="#fff"/><path d="M8 7V4q0-3 4-3t4 3v3" fill="none" stroke="#fff" stroke-width="2"/><path d="M8 11h3.500v3.500H8zM12.500 11H16v3.500h-3.500zM8 15.500h3.500V19H8zM12.500 15.500H16V19h-3.500z" fill="#111"/></svg></span>
    <span class="app run"><svg class="ai" viewBox="0 0 24 24"><path d="M1 3h9l2 3h11v16H1z" fill="#f6d66a"/><path d="M1 8h22v4H1z" fill="#fbeaa0"/><path d="M8 14h8l-1 8H9z" fill="#2c9ae0"/></svg></span>
    <span class="app run"><svg class="ai" viewBox="0 0 24 24"><path d="M8 2q10-2 13 5-3-2-7-1 7 5 3 13-4 5-11 3 7-1 8-6 0-5-6-6-7 0-7 5Q-1 7 8 2z" fill="#1f8ae6"/></svg></span>
    <span class="app run"><svg class="ai" viewBox="0 0 24 24"><circle cx="12" cy="12" r="10" fill="#7ccb3c"/><circle cx="12" cy="12" r="6" fill="#e8f8d8"/><path d="M8 12h8M8 12a4 4 0 0 1 8 0M9 15q3 2 6 0" fill="none" stroke="#3c9a2c" stroke-width="2"/></svg></span>
    <span class="app run active"><svg class="ai" viewBox="0 0 24 24"><use href="#logo"/></svg></span>
    <span class="app run"><svg class="ai" viewBox="0 0 24 24"><rect x="1" y="1" width="22" height="22" rx="2" fill="#f0a020"/><path d="M4 5l13-2 3 15-13 2z" fill="#fbf1d0"/><path d="M7 8h8M7 11h8M8 14h7" stroke="#b08a4a"/><path d="M21 2L12 16" stroke="#c8441c" stroke-width="2"/></svg></span>
  </div>
  <div class="cpu"><span>27%</span><span>CPU使用</span></div>
  <div class="tray">
    <svg class="ti" viewBox="0 0 16 16"><path d="M2 11l6-6 6 6" fill="none" stroke="#fff" stroke-width="1.300"/></svg>
    <svg class="ti" viewBox="0 0 16 16"><path d="M1 5h2V3h2v2h10v8H1z" fill="none" stroke="#eee"/><path d="M6 7h8v4H6z" fill="#ccc"/></svg>
    <svg class="ti" viewBox="0 0 16 16"><path d="M2 14q0-10 12-12M5 14q0-7 9-9M8 14q0-4 6-6" fill="none" stroke="#999" stroke-width="1.200"/><circle cx="12" cy="13" r="1.500" fill="#ddd"/></svg>
    <svg class="ti" viewBox="0 0 16 16"><path d="M1 6h3l4-4v12l-4-4H1z" fill="none" stroke="#eee"/><path d="M10 5q2 3 0 6M12 3q4 5 0 10" fill="none" stroke="#ddd"/></svg>
    <span class="zh">中</span>
    <span class="sg sg-s">S</span>
  </div>
  <div class="clock"><span>17:25</span><span>2017/8/14</span></div>
  <div class="notif"><svg class="ti nt" viewBox="0 0 16 16"><path d="M1 1h14v11H6l-3 3v-3H1z" fill="#fff"/><path d="M3 4h10M3 6.500h10M3 9h7" stroke="#333"/></svg><span class="nbadge">4</span></div>
  <i class="showd"></i>
</div>

<div class="badge">69</div>
<svg class="annot" viewBox="0 0 1366 768" aria-hidden="true">
  <ellipse cx="874" cy="151" rx="51" ry="24"/>
  <ellipse cx="927" cy="531" rx="125" ry="40"/>
</svg>
</body>
</html>
```

FILE: styles.css
```css
* { box-sizing: border-box; }
html, body { margin: 0; padding: 0; }
body {
  width: 1366px; height: 768px; overflow: hidden; position: relative;
  display: flex; flex-direction: column;
  background: #efefef; color: #111;
  font: 12px/16px "Noto Sans CJK SC", "Liberation Sans", sans-serif;
}
.defs { position: absolute; width: 0; height: 0; }
.i { width: 16px; height: 16px; flex: none; display: block; }
.m { font: 10px/16px "DejaVu Sans Mono", monospace; }

/* title */
.title { height: 23px; background: #fff; display: flex; align-items: center; padding-left: 5px; flex: none; }
.logo { width: 15px; height: 15px; margin-right: 3px; }
.title-text { font-size: 12.600px; white-space: nowrap; }
.win { margin-left: auto; display: flex; }
.wb { width: 12px; height: 12px; margin: 0 17px 0 17px; }
.win .wb:last-child { margin-right: 19px; }

/* menu */
.menu { height: 31px; flex: none; display: flex; align-items: center; gap: 10.500px; padding-left: 7px; }
.mi { white-space: nowrap; }
.mn { margin-right: -1px; }
.mp { margin-right: 1px; }
.mpp { margin-right: 2px; }
.menu-tail { display: flex; align-items: center; gap: 7px; flex: 1; min-width: 0; margin-left: -2px; }
.news { width: 187px; height: 28px; line-height: 28px; background: #f7f7f7; color: #6a3000; text-align: center; margin: 0 -1px; flex: none; }
.phone { letter-spacing: .3px; }
.i-bell { margin-left: 7px; }
.more { font-size: 13px; line-height: 12px; margin-top: -8px; margin-left: auto; font-weight: 700; }
.more-end { margin-left: auto; margin-right: 3px; }

/* toolbars */
.row { display: flex; gap: 2px; flex: none; }
.grp { display: flex; align-items: center; gap: 7px; background: #f7f7f7; flex: none; white-space: nowrap; }
.t { display: flex; align-items: center; gap: 4px; flex: none; white-space: nowrap; }
.off { color: #8e8e8e; }
.ar { width: 0; height: 0; flex: none; border: 3px solid transparent; border-top: 3.500px solid #222; border-bottom: 0; }
.ar-tight { margin: 0 -2px; }
.ar-s { margin: 0 -1px; }
.off-ar { border-top-color: #aaa; }
.sep { width: 1px; height: 20px; background: #b8b8b8; flex: none; margin: 0 -1px; }
.sep-r { margin-right: 1px; }
.gr { width: 3px; height: 18px; flex: none; margin-right: -2px;
  background: radial-gradient(circle at 1.500px 1.500px, #999 1px, transparent 1.200px) 0 0 / 3px 4px; }
.gr-c { margin-right: -4px; }
.on { outline: 1px solid #0a78d4; outline-offset: -1px; background: #d9e9f7; }
.sigma { width: 16px; text-align: center; font: 700 14px/16px "DejaVu Serif", serif; }
.t-white { background: #fff; height: 26px; padding: 0 8px 0 0; margin-right: -10px; }

.r1 { height: 30px; }
.r1 .grp { height: 28px; }
.g-a { width: 150px; padding-left: 6px; gap: 5px; }
.i-open { margin-left: 6px; }
.g-a .sep { margin: 0 3px; height: 24px; }
.g-b { width: 548px; padding-left: 5px; }
.g-c { width: 664px; padding-left: 6px; }

.main { flex: 1; min-height: 0; display: flex; }
.nav { width: 234px; flex: none; padding: 0 6px 3px 0; display: flex; flex-direction: column; }
.nav-head { height: 14px; background: #0a4fe0; color: #fff; font-size: 12px; line-height: 14px; display: flex; align-items: center; margin-bottom: 2px; padding-left: 1px; flex: none; }
.nav-head > span:first-child { flex: 1; }
.pin { width: 10px; height: 12px; margin-right: 3px; }
.nav-x { width: 15px; height: 14px; margin-right: 1px; }
.nbtn { height: 22px; border: 1px solid #a0a0a0; background: #f0f0f0; font: inherit; color: #111; padding: 0; display: block; width: 100%; margin-bottom: 1px; flex: none; }
.nb-first { padding-top: 1px; }
.nb2 { margin-top: 1px; }
.treebox { flex: 1; min-height: 0; border: 2px solid #a8a8a8; margin: 0 0 0 2px; background: #fff; display: flex; position: relative; overflow: hidden; width: 226px; }
.tree { flex: 1; position: relative; overflow: hidden; }
.plus { height: 26px; padding: 4px 0 0 5px; display: flex; align-items: flex-start; }
.pm { width: 16px; height: 16px; display: block; }
.pm2 { margin-left: 7px; }
.node { height: 16px; display: flex; align-items: center; position: relative; padding-left: 22px; gap: 4px; }
.node::before { content: ""; position: absolute; left: 15px; top: 8px; width: 7px; border-top: 1px dotted #777; }
.chev { position: absolute; left: 9px; top: 3px; width: 7px; height: 7px; border: solid #555; border-width: 0 2px 2px 0; transform: rotate(45deg); }
.chev-r { transform: rotate(-45deg); top: 4px; left: 7px; border-color: #aaa; }
.kids { position: relative; }
.kids::before { content: ""; position: absolute; left: 33px; top: 0; bottom: 8px; border-left: 1px dotted #777; }
.kids::after { content: ""; position: absolute; left: 13px; top: 0; bottom: 0; border-left: 1px dotted #777; }
.leaf { height: 16px; display: flex; align-items: center; gap: 4px; padding-left: 42px; position: relative; white-space: nowrap; }
.leaf::before { content: ""; position: absolute; left: 34px; top: 8px; width: 8px; border-top: 1px dotted #777; }
.cur::after { content: ""; position: absolute; left: 41px; top: 0; width: 57px; height: 16px; background: #d4d4d4; z-index: 0; }
.cur > * { position: relative; z-index: 1; }
.tag { margin-left: -3px; }
.new { font: 700 9px/9px "Liberation Sans", sans-serif; background: #ffd800; color: #333; align-self: flex-start; margin-left: -4px; padding: 0 1px; }
.vbar { width: 15px; flex: none; margin-right: 1px; background: #f0f0f0; display: flex; flex-direction: column; align-items: center; padding-top: 25px; position: relative; }
.thumb { width: 15px; height: 244px; background: #c8c8c8; margin-top: 215px; margin-bottom: 14px; flex: none; }
.sb-a { width: 9px; height: 7px; flex: none; }
.sb-up { position: absolute; top: 28px; }

.work { width: 1132px; flex: none; display: flex; flex-direction: column; }
.r2 { height: 26px; }
.g2 { width: 790px; height: 24px; padding-left: 2px; margin-left: 1px; }
.r3 { height: 30px; }
.r3 .grp { height: 28px; }
.g3a { width: 638px; padding-left: 2px; margin-left: 1px; }
.g3b { width: 422px; padding-left: 2px; }
.r4 { height: 28px; }
.r4 .grp { height: 26px; }
.g4 { width: 1095px; padding-left: 2px; margin-left: 1px; }
.g4b { width: 19px; margin-left: 1px; padding-left: 2px; }
.g4 .on-o { margin: 0 -3px 0 -4px; padding: 0 3px 0 4px; height: 26px; }
.combo { display: flex; align-items: center; justify-content: space-between; background: #fff; height: 24px; padding: 0 4px 0 2px; flex: none; margin-right: -4px; }
.c57 { width: 57px; } .c69 { width: 69px; } .c68 { width: 68px; } .c67 { width: 67px; }
.c53 { width: 53px; margin: 0 0 0 -5px; justify-content: flex-end; }
.c55 { width: 55px; margin-left: 3px; margin-right: 0; }
.combo-end { margin-right: 0; }

.cad { display: block; width: 1132px; height: 272px; flex: none; }
.olive rect { fill: #a9bf63; }
.hatch path { stroke: #fff; fill: none; stroke-width: .8; }
.mag path { stroke: #b85a9c; stroke-width: 1.500; fill: none; }
.teal circle { fill: #3e7a7d; }
.beam rect { fill: #00e800; }
.pur rect { fill: #7a00f0; }
.dg path { stroke: #0a7a0a; fill: none; }
.dr path { stroke: #8a0000; fill: none; }
.rd path { stroke: #f00; fill: none; }
.tiny-g text { font: 5px "DejaVu Sans Mono", monospace; fill: #8f8a80; }
.tiny-w text { font: 5px "DejaVu Sans Mono", monospace; fill: #ddd; }
.axisno text { font: 13px "DejaVu Sans", sans-serif; fill: #a95ca0; text-anchor: middle; }
.axisl text { font: 700 14px "DejaVu Sans", sans-serif; fill: #bbb; text-anchor: middle; }
.dimt text { font: 17px "DejaVu Sans", sans-serif; fill: #aaa; }
.d6600 { font: 17px "DejaVu Sans", sans-serif; fill: #9a78a8; }

.r5 { height: 34px; padding-top: 2px; }
.r5 .grp { height: 25px; }
.g5a { width: 209px; padding-left: 2px; margin-left: 1px; gap: 7px; }
.g5a .on { height: 25px; padding: 0 3px 0 4px; margin: 0 -4px 0 -3px; }
.g5b { width: 262px; padding-left: 2px; gap: 7px; }
.g5b .on { height: 25px; padding: 0 3px; width: 51px; gap: 4px; }
.pair { display: flex; margin: 0 -4px 0 -3px; }
.g5c { width: 411px; padding-left: 2px; gap: 2px; }
.g5c .combo { margin-right: 0; }
.g5c .sep-x { margin: 0 -1px 0 4px; }
.g5c .sep-c { margin: 0 1px 0 4px; }
.gt { color: #8a8a8a; font-size: 12px; }
.gt-x { margin-right: 3px; }
.g-y { margin: 0 1px 0 4px; }
.gt-d { margin-left: 2px; }
.num { display: block; position: relative; height: 24px; background: #f5f5f5; border: 1px solid #7a7a7a; color: #8a8a8a; font-size: 13px; line-height: 22px; text-align: right; padding-right: 20px; flex: none; }
.n58 { width: 58px; } .n68 { width: 68px; }
.spin { position: absolute; right: 4px; top: 4px; width: 7px; height: 14px;
  background:
    linear-gradient(45deg, transparent 50%, #666 50%) 0 0 / 3.500px 3.500px no-repeat,
    linear-gradient(-45deg, transparent 50%, #666 50%) 3.500px 0 / 3.500px 3.500px no-repeat,
    linear-gradient(135deg, transparent 50%, #666 50%) 0 10px / 3.500px 3.500px no-repeat,
    linear-gradient(-135deg, transparent 50%, #666 50%) 3.500px 10px / 3.500px 3.500px no-repeat; }
.chk { width: 11px; height: 11px; border: 1px solid #8a8a8a; background: #fff; flex: none; }
.rot-l { margin: 0 2px 0 7px; }

.lower { flex: 1; min-height: 0; display: flex; }
.split { width: 12px; flex: none; position: relative; background: radial-gradient(circle at 3px 2px, #a8a8a8 1px, transparent 1.200px) 0 0 / 4px 5px, #efefef; }
.close { position: absolute; left: 1px; top: 1px; width: 10px; height: 10px; }
.panel { flex: 1; min-width: 0; display: flex; flex-direction: column; background: #fff; border-left: 1px solid #a0a0a0; }
.ptb { height: 26px; flex: none; display: flex; align-items: center; gap: 10px; padding-left: 4px; background: linear-gradient(#fff, #f2f2f2); }
.ptb .t:first-child { margin-right: -2px; }
.t-paste { margin-right: -2px; }
.tablewrap { width: 1116px; flex: 1; min-height: 0; overflow: hidden; background: #fff; border-top: 1px solid #bdbdbd; }
.grid { table-layout: fixed; border-collapse: collapse; width: 1126px; }
.w32 { width: 32px; } .w40 { width: 40px; } .w41 { width: 41px; } .w71 { width: 71px; } .w81 { width: 81px; } .w101 { width: 101px; }
.grid th { height: 19px; padding: 0; font-weight: 400; border: 1px solid #c4c4c4; background: linear-gradient(#fff, #ececec); white-space: nowrap; overflow: hidden; }
.grid .hdr2 th { padding-bottom: 2px; }
.grid th.corner { border-left: 0; background: #f4f4f4; }
.grid th.kh { background: linear-gradient(#fbdf9f, #f3c878); color: #7d0f8a; }
.grid th.lastc { border-right: 0; }
.grid td { height: 19px; padding: 2px 0 0 1px; border: 1px solid #c4c4c4; font: 10px/16px "DejaVu Sans Mono", monospace; white-space: nowrap; overflow: hidden; background: #fff; }
.grid td:last-child { border-right: 0; }
.grid .sel-row td { background: #a6c9ee; }
.grid td.rh { text-align: center; background: #f4f4f4; padding: 2px 0 0; border-left: 0; }
.grid .sel-row td.rh-s { background: #f9d695; color: #7d0f8a; }
.grid .sel-row td.active { position: relative; background: #8cbcec; outline: 3px solid #000; outline-offset: -2px; overflow: visible; }
.handle { position: absolute; right: -3px; bottom: -3px; width: 5px; height: 5px; background: #000; outline: 1px solid #fff; }
.grid td.below { border-right: 2px solid #000; }
.hbar { height: 16px; flex: none; display: flex; align-items: center; background: #f0f0f0; width: 1116px; margin-bottom: 4px; position: relative; }
.sb-h { width: 8px; height: 10px; margin-left: 3px; flex: none; }
.hthumb { position: absolute; left: 567px; width: 447px; height: 16px; background: #c8c8c8; }
.sb-r { position: absolute; right: 5px; }

/* status */
.status { height: 20px; flex: none; display: flex; gap: 2px; background: #efefef; white-space: nowrap; position: relative; }
.cell { background: #fff; border: 1px solid #ddd; height: 20px; line-height: 18px; padding-left: 1px; flex: none; overflow: hidden; }
.s148 { width: 148px; } .s77 { width: 77px; margin-left: 1px; } .s97 { width: 97px; margin-left: 1px; } .s48 { width: 48px; margin-left: 1px; padding-left: 2px; }
.s-msg { width: 986px; margin-left: 1px; padding-left: 1px; }
.ime { position: absolute; right: 0; top: 0; width: 186px; height: 20px; background: #fff; display: flex; align-items: center; padding: 0 0 3px 2px; }
.sg { display: block; width: 24px; height: 24px; background: #f2511a; color: #fff; font: 700 20px/24px "Liberation Sans", sans-serif; text-align: center; border-radius: 5px; transform: rotate(-10deg); flex: none; margin-top: -2px; }
.ying { color: #1f72c8; font-weight: 700; font-size: 14px; margin: 0 8px 0 7px; }
.ime-p { color: #1f72c8; width: 22px; font-weight: 700; flex: none; }
.ii { width: 16px; height: 16px; flex: none; margin-right: 6px; }

/* taskbar */
.taskbar { height: 40px; flex: none; display: flex; background: #07131d; color: #fff; position: relative; }
.start { width: 48px; flex: none; background: #000; display: flex; align-items: center; justify-content: center; }
.winlogo { width: 16px; height: 16px; }
.search { width: 344px; flex: none; background: #3a3a3a; color: #999; display: flex; align-items: center; padding-left: 9px; font-size: 14px; }
.ring { width: 21px; height: 21px; border: 2.500px solid #ddd; border-radius: 50%; margin-right: 6px; flex: none; }
.mic { width: 12px; height: 20px; margin-left: auto; margin-right: 14px; }
.apps { display: flex; width: 621px; flex: none; padding-left: 2px; }
.app { width: 49px; height: 40px; display: flex; align-items: center; justify-content: center; position: relative; flex: none; }
.tsep { width: 1px; height: 20px; background: #444; margin: 10px 9px 0 13px; flex: none; }
.ai { width: 24px; height: 24px; }
.run::after { content: ""; position: absolute; left: 4px; right: 4px; bottom: 0; height: 3px; background: #76b9ed; }
.active { background: #2f3a44; }
.active::after { left: 0; right: 0; background: #8cc5f0; }
.cpu { width: 70px; flex: none; display: flex; flex-direction: column; align-items: center; font-size: 12px; line-height: 18px; padding-top: 3px; }
.tray { display: flex; align-items: center; width: 171px; flex: none; padding-left: 7px; }
.ti { width: 16px; height: 16px; flex: none; margin-right: 8px; }
.zh { font-size: 14px; margin: 0 15px 0 0; width: 14px; flex: none; }
.sg-s { width: 14px; height: 15px; font-size: 12px; line-height: 15px; margin: 0; border-radius: 3px; }
.clock { width: 70px; flex: none; display: flex; flex-direction: column; align-items: center; font-size: 13px; line-height: 18px; padding-top: 3px; }
.notif { width: 38px; position: relative; flex: none; }
.nt { position: absolute; left: 1px; top: 11px; width: 17px; height: 17px; margin: 0; }
.nbadge { position: absolute; left: 8px; top: 20px; width: 17px; height: 17px; border-radius: 50%; background: #222; border: 1px solid #777; text-align: center; line-height: 15px; font-size: 12px; font-weight: 700; }
.showd { width: 5px; flex: none; border-left: 1px solid #444; margin-left: auto; }

/* overlays */
.badge { position: absolute; left: 324px; top: -25px; width: 44px; height: 44px; border-radius: 50%; background: radial-gradient(circle at 50% 60%, #4cc25a, #2e9a3c); border: 2px solid #dfe6df; box-shadow: 0 1px 2px 1px rgba(0,0,0,.35); color: #fff; font: 700 12px/14px "Liberation Sans", sans-serif; text-align: center; padding-top: 23px; }
.annot { position: absolute; left: 0; top: 0; width: 1366px; height: 768px; pointer-events: none; }
.annot ellipse { fill: none; stroke: #f00; stroke-width: 3; }
```
